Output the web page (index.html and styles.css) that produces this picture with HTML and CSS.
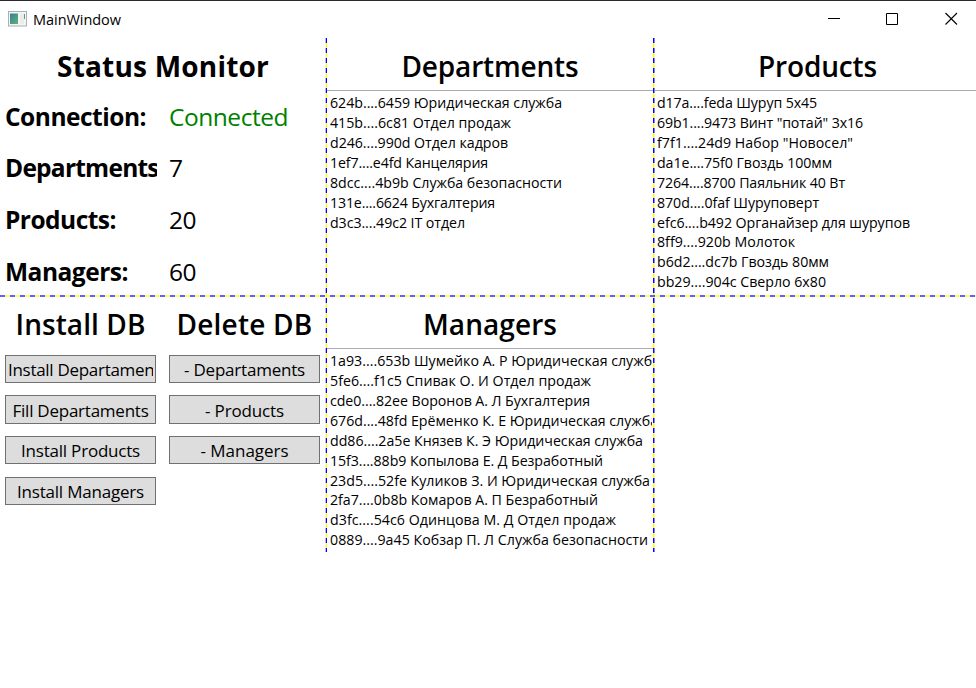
FILE: index.html
```html
<!DOCTYPE html>
<html lang="ru">
<head>
<meta charset="utf-8">
<title>MainWindow</title>
<link rel="stylesheet" href="styles.css">
</head>
<body>
<header class="titlebar">
  <svg class="app-icon" width="19" height="16" viewBox="0 0 19 16">
    <defs><linearGradient id="g" x1="0" y1="0" x2="1" y2="1"><stop offset="0" stop-color="#3c7c9c"/><stop offset="1" stop-color="#5cb474"/></linearGradient></defs>
    <rect x=".5" y=".5" width="18" height="14.500" fill="#f4f4f4" stroke="#a9b0b6"/>
    <rect x="2" y="2.500" width="8" height="10.500" fill="url(#g)"/>
    <rect x="12" y="2.500" width="4" height="10.500" fill="#e9ecea"/>
    <path d="M16.500 3v5" stroke="#55a56c"/>
  </svg>
  <span class="app-name"><span data-width="88">MainWindow</span></span>
  <svg class="controls" width="131" height="13" viewBox="0 0 131 13" fill="none" stroke="#000">
    <path d="M0 6.500h12M58.500 1.500h11v11h-11z"/>
    <path d="M117.500 1l11.500 11.500M129 1l-11.500 11.500" stroke-width="1.100"/>
  </svg>
</header>
<main class="board">
  <section class="cell status">
    <h1 class="bold"><span data-width="212">Status Monitor</span></h1>
    <dl>
      <dt><span data-width="141">Connection:</span></dt><dd class="ok"><span data-width="119">Connected</span></dd>
      <dt><span data-width="160">Departments:</span></dt><dd><span>7</span></dd>
      <dt><span data-width="111">Products:</span></dt><dd><span data-width="27">20</span></dd>
      <dt><span data-width="123">Managers:</span></dt><dd><span data-width="27">60</span></dd>
    </dl>
  </section>
  <section class="cell">
    <h2><span data-width="177">Departments</span></h2>
    <ul>
      <li><span data-width="232">624b....6459 Юридическая служба</span></li>
      <li><span data-width="181">415b....6c81 Отдел продаж</span></li>
      <li><span data-width="178">d246....990d Отдел кадров</span></li>
      <li><span data-width="158">1ef7....e4fd Канцелярия</span></li>
      <li><span data-width="232">8dcc....4b9b Служба безопасности</span></li>
      <li><span data-width="165">131e....6624 Бухгалтерия</span></li>
      <li><span data-width="135">d3c3....49c2 IT отдел</span></li>
    </ul>
  </section>
  <section class="cell products">
    <h2><span data-width="119">Products</span></h2>
    <ul>
      <li><span data-width="160">d17a....feda Шуруп 5x45</span></li>
      <li><span data-width="206">69b1....9473 Винт "потай" 3x16</span></li>
      <li><span data-width="196">f7f1....24d9 Набор "Новосел"</span></li>
      <li><span data-width="175">da1e....75f0 Гвоздь 100мм</span></li>
      <li><span data-width="188">7264....8700 Паяльник 40 Вт</span></li>
      <li><span data-width="162">870d....0faf Шуруповерт</span></li>
      <li><span data-width="253">efc6....b492 Органайзер для шурупов</span></li>
      <li><span data-width="138">8ff9....920b Молоток</span></li>
      <li><span data-width="172">b6d2....dc7b Гвоздь 80мм</span></li>
      <li><span data-width="169">bb29....904c Сверло 6x80</span></li>
    </ul>
  </section>
  <section class="cell actions">
    <div class="column">
      <h2><span data-width="130">Install DB</span></h2>
      <button><span data-width="160">Install Departaments</span></button>
      <button><span data-width="136">Fill Departaments</span></button>
      <button><span data-width="119">Install Products</span></button>
      <button><span data-width="127">Install Managers</span></button>
    </div>
    <div class="column">
      <h2><span data-width="136">Delete DB</span></h2>
      <button><span data-width="121">- Departaments</span></button>
      <button><span data-width="79">- Products</span></button>
      <button><span data-width="88">- Managers</span></button>
    </div>
  </section>
  <section class="cell managers">
    <h2><span data-width="134">Managers</span></h2>
    <ul>
      <li><span data-width="330">1a93....653b Шумейко А. Р Юридическая служба</span></li>
      <li><span data-width="261">5fe6....f1c5 Спивак О. И Отдел продаж</span></li>
      <li><span data-width="260">cde0....82ee Воронов А. Л Бухгалтерия</span></li>
      <li><span data-width="328">676d....48fd Ерёменко К. Е Юридическая служба</span></li>
      <li><span data-width="313">dd86....2a5e Князев К. Э Юридическая служба</span></li>
      <li><span data-width="273">15f3....88b9 Копылова Е. Д Безработный</span></li>
      <li><span data-width="320">23d5....52fe Куликов З. И Юридическая служба</span></li>
      <li><span data-width="268">2fa7....0b8b Комаров А. П Безработный</span></li>
      <li><span data-width="286">d3fc....54c6 Одинцова М. Д Отдел продаж</span></li>
      <li><span data-width="318">0889....9a45 Кобзар П. Л Служба безопасности</span></li>
    </ul>
  </section>
  <i class="split v first"></i>
  <i class="split v second"></i>
  <i class="split h"></i>
</main>
<script src="fit.js"></script>
</body>
</html>
```
FILE: styles.css
```css
* { box-sizing: border-box; margin: 0; padding: 0; }
body {
  width: 976px; height: 688px; overflow: hidden;
  background: #fff; color: #000;
  border-top: 1px solid #2b2830;
  font-family: "Open Sans", "Noto Sans", sans-serif;
}
span { white-space: nowrap; }
.titlebar { height: 37px; display: flex; align-items: center; padding: 0 17px 0 8px; }
.app-icon { margin-top: -2px; }
.app-name { flex: 1; margin-left: 6px; font-size: 14.500px; }
.controls { margin-top: -2px; }
.board {
  position: relative;
  display: grid; grid-template-columns: 326px 327px 323px; grid-template-rows: 258px 256px;
}
.cell { overflow: hidden; min-width: 0; }
h1, h2 { height: 52px; line-height: 56px; font-size: 28px; font-weight: 600; text-align: center; }
h1.bold { font-weight: 700; }
.cell > h2 { padding-left: 1px; }
.products > h2 { padding-left: 6px; }
dl { display: grid; grid-template-columns: 152px 1fr; column-gap: 12px; grid-template-rows: 51px 52px 52px 51px; padding-left: 5px; font-size: 24.500px; line-height: 53px; }
dt { font-weight: 700; overflow: hidden; }
.ok { color: #008000; }
ul { list-style: none; border-top: 1px solid #abadb3; padding: 2.400px 0 0 4px; font-size: 14.200px; line-height: 19.860px; }
.managers li { overflow: hidden; margin-right: 1px; }
.actions { display: flex; gap: 13px; padding: 0 6px 0 5px; }
.column { width: 151px; display: flex; flex-direction: column; }
.column h2 { height: 59px; flex: none; display: flex; justify-content: center; }
button {
  flex: none; height: 28px; margin-bottom: 13px; padding: 2px 2px 0; overflow: clip; overflow-clip-margin: content-box;
  display: flex; justify-content: safe center; align-items: center;
  background: #ddd; border: 1px solid #707070; color: #000;
  font: 17px/26px "Open Sans", "Noto Sans", sans-serif;
}
button:nth-of-type(1) { margin-bottom: 12px; }
button:nth-of-type(2) { height: 29px; margin-bottom: 12px; }
.split { position: absolute; }
.v { top: 0; bottom: 0; width: 2px; background: repeating-linear-gradient(#0000ff 0 5px, #ffff00 5px 10px); }
.first { left: 325px; }
.second { left: 653px; }
.first::before, .second::before { content: ""; position: absolute; top: 0; bottom: 0; width: 1px; background: #fff; }
.first::before { left: 0; opacity: .7; }
.second::before { left: 1px; opacity: .5; }
.h { top: 257px; left: 0; right: 0; height: 2px; background: repeating-linear-gradient(90deg, #6060ff 0 5px, #ffff60 5px 10px); }
```
FILE: fit.js
```js
// Adjust tracking so every label takes its nominal width.
document.querySelectorAll("[data-width]").forEach(function (el) {
  var extra = el.dataset.width - el.getBoundingClientRect().width;
  el.style.letterSpacing = extra / el.textContent.length + "px";
});
```
